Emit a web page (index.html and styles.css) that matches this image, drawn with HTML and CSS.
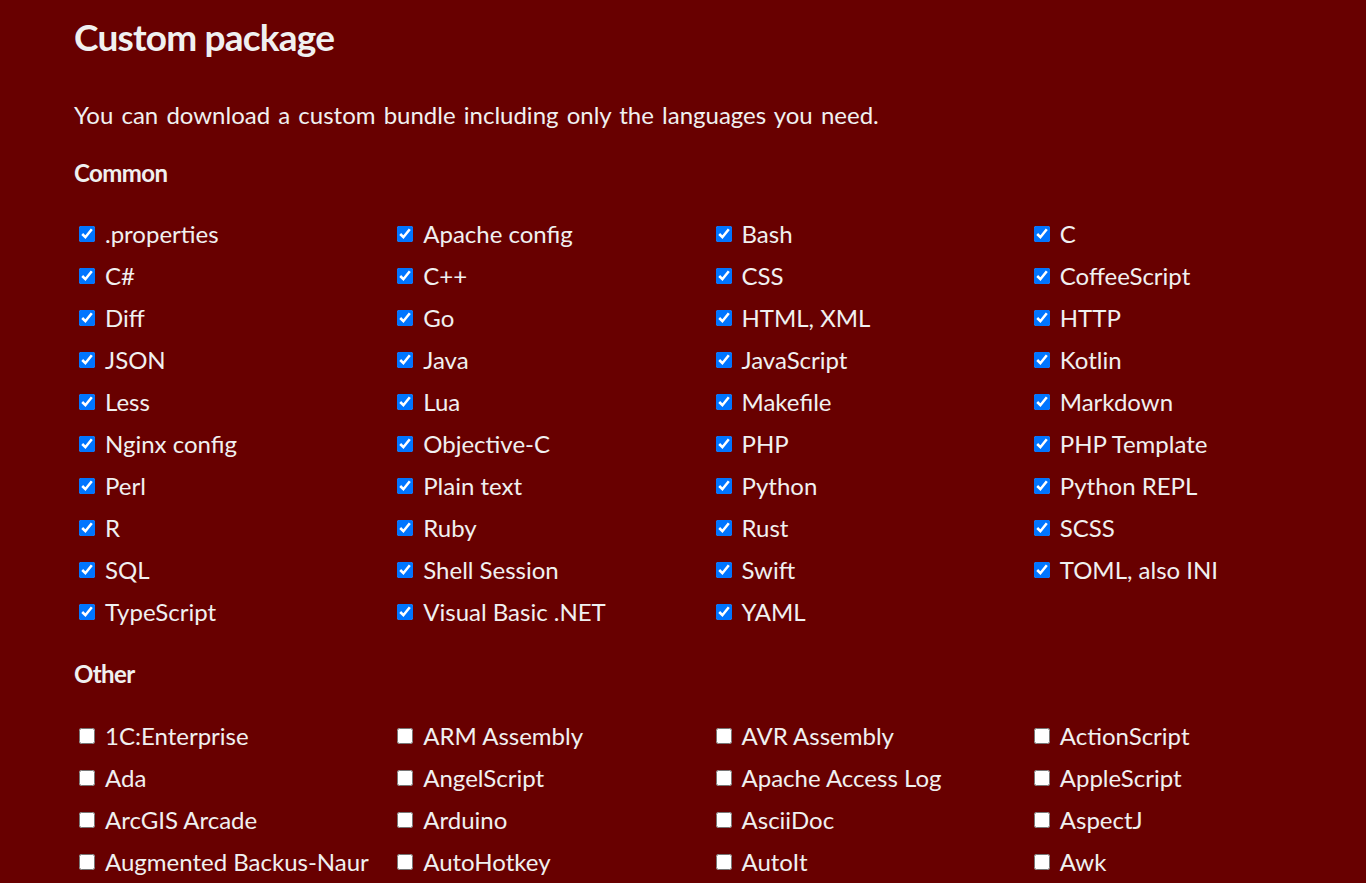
FILE: index.html
```html
<!DOCTYPE html>
<html lang="en">
<head>
    <meta charset="UTF-8">
    <meta name="viewport" content="width=device-width, initial-scale=1.0">
    <title>Custom package</title>
    <link rel="stylesheet" href="styles.css">
</head>
<body>
    <div class="page">
        <h1 class="title">Custom package</h1>
        <p class="intro">You can download a custom bundle including only the languages you need.</p>

        <h3 class="group-title">Common</h3>
        <ul class="languages">
            <li><label><input type="checkbox" checked> .properties</label></li>
            <li><label><input type="checkbox" checked> Apache config</label></li>
            <li><label><input type="checkbox" checked> Bash</label></li>
            <li><label><input type="checkbox" checked> C</label></li>
            <li><label><input type="checkbox" checked> C#</label></li>
            <li><label><input type="checkbox" checked> C++</label></li>
            <li><label><input type="checkbox" checked> CSS</label></li>
            <li><label><input type="checkbox" checked> CoffeeScript</label></li>
            <li><label><input type="checkbox" checked> Diff</label></li>
            <li><label><input type="checkbox" checked> Go</label></li>
            <li><label><input type="checkbox" checked> HTML, XML</label></li>
            <li><label><input type="checkbox" checked> HTTP</label></li>
            <li><label><input type="checkbox" checked> JSON</label></li>
            <li><label><input type="checkbox" checked> Java</label></li>
            <li><label><input type="checkbox" checked> JavaScript</label></li>
            <li><label><input type="checkbox" checked> Kotlin</label></li>
            <li><label><input type="checkbox" checked> Less</label></li>
            <li><label><input type="checkbox" checked> Lua</label></li>
            <li><label><input type="checkbox" checked> Makefile</label></li>
            <li><label><input type="checkbox" checked> Markdown</label></li>
            <li><label><input type="checkbox" checked> Nginx config</label></li>
            <li><label><input type="checkbox" checked> Objective-C</label></li>
            <li><label><input type="checkbox" checked> PHP</label></li>
            <li><label><input type="checkbox" checked> PHP Template</label></li>
            <li><label><input type="checkbox" checked> Perl</label></li>
            <li><label><input type="checkbox" checked> Plain text</label></li>
            <li><label><input type="checkbox" checked> Python</label></li>
            <li><label><input type="checkbox" checked> Python REPL</label></li>
            <li><label><input type="checkbox" checked> R</label></li>
            <li><label><input type="checkbox" checked> Ruby</label></li>
            <li><label><input type="checkbox" checked> Rust</label></li>
            <li><label><input type="checkbox" checked> SCSS</label></li>
            <li><label><input type="checkbox" checked> SQL</label></li>
            <li><label><input type="checkbox" checked> Shell Session</label></li>
            <li><label><input type="checkbox" checked> Swift</label></li>
            <li><label><input type="checkbox" checked> TOML, also INI</label></li>
            <li><label><input type="checkbox" checked> TypeScript</label></li>
            <li><label><input type="checkbox" checked> Visual Basic .NET</label></li>
            <li><label><input type="checkbox" checked> YAML</label></li>
        </ul>

        <h3 class="group-title">Other</h3>
        <ul class="languages">
            <li><label><input type="checkbox"> 1C:Enterprise</label></li>
            <li><label><input type="checkbox"> ARM Assembly</label></li>
            <li><label><input type="checkbox"> AVR Assembly</label></li>
            <li><label><input type="checkbox"> ActionScript</label></li>
            <li><label><input type="checkbox"> Ada</label></li>
            <li><label><input type="checkbox"> AngelScript</label></li>
            <li><label><input type="checkbox"> Apache Access Log</label></li>
            <li><label><input type="checkbox"> AppleScript</label></li>
            <li><label><input type="checkbox"> ArcGIS Arcade</label></li>
            <li><label><input type="checkbox"> Arduino</label></li>
            <li><label><input type="checkbox"> AsciiDoc</label></li>
            <li><label><input type="checkbox"> AspectJ</label></li>
            <li><label><input type="checkbox"> Augmented Backus-Naur</label></li>
            <li><label><input type="checkbox"> AutoHotkey</label></li>
            <li><label><input type="checkbox"> AutoIt</label></li>
            <li><label><input type="checkbox"> Awk</label></li>
        </ul>
    </div>
</body>
</html>
```

FILE: styles.css
```css
body {
    margin: 0;
    background-color: #680000;
    color: #f0f0f0;
    font-family: Lato, "Open Sans", sans-serif;
    font-size: 24px;
}

.page {
    padding-left: 74px;
    width: 1273px;
}

.title {
    margin: 14px 0 0;
    font-size: 37px;
    line-height: 46px;
    font-weight: bold;
    letter-spacing: -0.8px;
}

.intro {
    margin: 39px 0 0;
    line-height: 32px;
    word-spacing: 2px;
}

.group-title {
    margin: 26px 0 0;
    font-size: 24px;
    line-height: 32px;
    font-weight: bold;
    letter-spacing: -0.6px;
}

.languages + .group-title {
    margin-top: 25px;
}

.languages {
    list-style: none;
    margin: 24px 0 0;
    padding: 0;
    display: grid;
    grid-template-columns: repeat(4, 1fr);
}

.languages + .group-title + .languages {
    margin-top: 25px;
}

.languages li {
    line-height: 42px;
    white-space: nowrap;
}

.languages label {
    display: flex;
    align-items: center;
}

.languages input {
    width: 16px;
    height: 16px;
    margin: 0 10px 0 5px;
}
```
